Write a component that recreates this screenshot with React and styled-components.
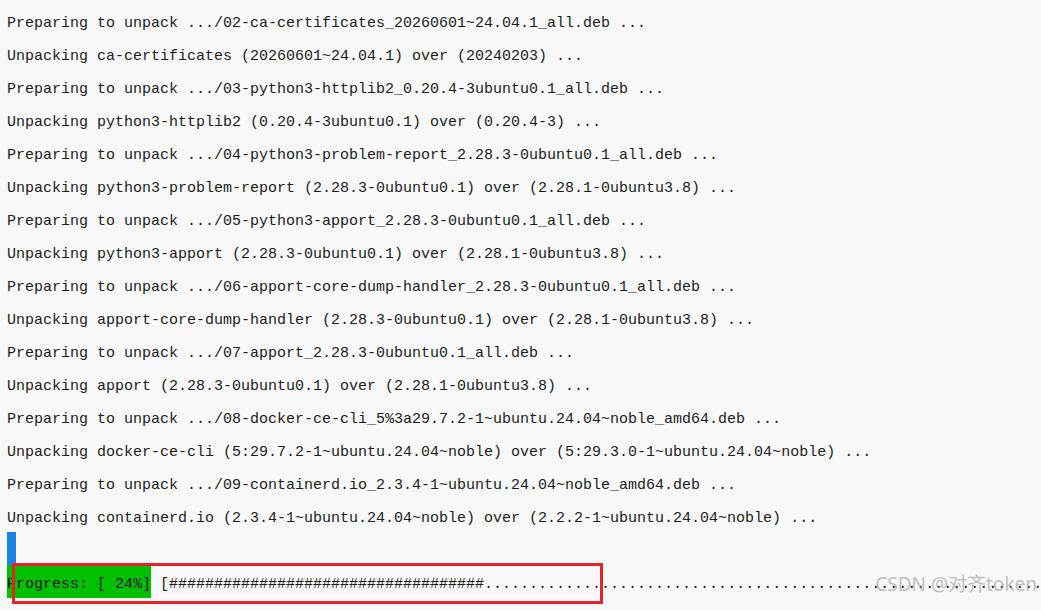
import styled, { createGlobalStyle } from "styled-components";

const GlobalStyle = createGlobalStyle`
  html, body {
    margin: 0;
    padding: 0;
    background: #f8f8f8;
  }
`;

const Terminal = styled.div`
  position: relative;
  width: 1041px;
  height: 610px;
  box-sizing: border-box;
  padding: 4px 0 0 7px;
  overflow: hidden;
  background: #f8f8f8;
  color: #1c1c1c;
  font-family: "Liberation Mono", "DejaVu Sans Mono", monospace;
  font-size: 15px;
  line-height: 39px;
`;

const Line = styled.div`
  white-space: pre;
  height: 33px;
`;

const Cursor = styled.span`
  display: inline-block;
  width: 9px;
  height: 33px;
  vertical-align: top;
  background: #1a85e6;
`;

const ProgressLine = styled.div`
  position: relative;
  white-space: pre;
  height: 33px;
`;

const Highlight = styled.span`
  display: inline-block;
  height: 33px;
  vertical-align: top;
  background: #00c000;
  color: #141414;
`;

const RedBox = styled.div`
  position: absolute;
  left: 5px;
  top: -2px;
  width: 591px;
  height: 41px;
  box-sizing: border-box;
  border: 3px solid #e8202a;
`;

const Watermark = styled.div`
  position: absolute;
  right: 4px;
  bottom: 14px;
  font-family: "Noto Sans", "Noto Sans CJK SC", sans-serif;
  font-size: 19px;
  line-height: 24px;
  color: rgba(150, 150, 150, 0.6);
  white-space: nowrap;
`;

const lines = [
  "Preparing to unpack .../02-ca-certificates_20260601~24.04.1_all.deb ...",
  "Unpacking ca-certificates (20260601~24.04.1) over (20240203) ...",
  "Preparing to unpack .../03-python3-httplib2_0.20.4-3ubuntu0.1_all.deb ...",
  "Unpacking python3-httplib2 (0.20.4-3ubuntu0.1) over (0.20.4-3) ...",
  "Preparing to unpack .../04-python3-problem-report_2.28.3-0ubuntu0.1_all.deb ...",
  "Unpacking python3-problem-report (2.28.3-0ubuntu0.1) over (2.28.1-0ubuntu3.8) ...",
  "Preparing to unpack .../05-python3-apport_2.28.3-0ubuntu0.1_all.deb ...",
  "Unpacking python3-apport (2.28.3-0ubuntu0.1) over (2.28.1-0ubuntu3.8) ...",
  "Preparing to unpack .../06-apport-core-dump-handler_2.28.3-0ubuntu0.1_all.deb ...",
  "Unpacking apport-core-dump-handler (2.28.3-0ubuntu0.1) over (2.28.1-0ubuntu3.8) ...",
  "Preparing to unpack .../07-apport_2.28.3-0ubuntu0.1_all.deb ...",
  "Unpacking apport (2.28.3-0ubuntu0.1) over (2.28.1-0ubuntu3.8) ...",
  "Preparing to unpack .../08-docker-ce-cli_5%3a29.7.2-1~ubuntu.24.04~noble_amd64.deb ...",
  "Unpacking docker-ce-cli (5:29.7.2-1~ubuntu.24.04~noble) over (5:29.3.0-1~ubuntu.24.04~noble) ...",
  "Preparing to unpack .../09-containerd.io_2.3.4-1~ubuntu.24.04~noble_amd64.deb ...",
  "Unpacking containerd.io (2.3.4-1~ubuntu.24.04~noble) over (2.2.2-1~ubuntu.24.04~noble) ...",
];

const bar = " [" + "#".repeat(35) + ".".repeat(65) + "]";

const App = () => {
  return (
    <>
      <GlobalStyle />
      <Terminal>
        {lines.map((text, i) => (
          <Line key={i}>{text}</Line>
        ))}
        <Line>
          <Cursor />
        </Line>
        <ProgressLine>
          <Highlight>Progress: [ 24%]</Highlight>
          {bar}
          <RedBox />
        </ProgressLine>
        <Watermark>CSDN @对齐token</Watermark>
      </Terminal>
    </>
  );
};

export default App;
